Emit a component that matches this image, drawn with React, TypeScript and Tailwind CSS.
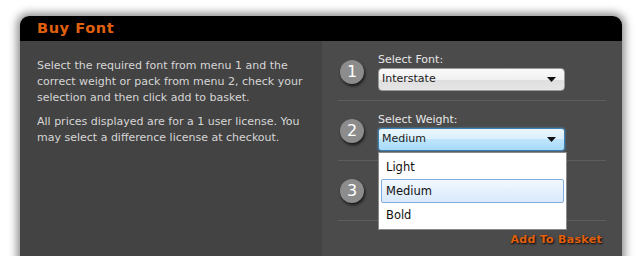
import React from "react";

const font = { fontFamily: '"DejaVu Sans", Verdana, sans-serif' };

function Circle({ n }: { n: number }) {
  return (
    <div className="w-6 h-6 rounded-full bg-[#8c8c8c] shadow-[1px_2px_3px_rgba(0,0,0,0.7)] flex items-center justify-center text-white text-[16px] leading-none shrink-0">
      {n}
    </div>
  );
}

function Caret() {
  return (
    <svg width="9" height="5" viewBox="0 0 9 5" className="shrink-0">
      <path d="M0 0h9L4.5 5z" fill="#111" />
    </svg>
  );
}

export default function App() {
  return (
    <div className="w-[640px] h-[256px] bg-white overflow-hidden pt-4 pl-5" style={font}>
      <div className="w-[602px] h-[260px] rounded-t-[9px] overflow-hidden shadow-[0_0_8px_3px_rgba(0,0,0,0.45)] flex flex-col">
        <div className="h-[25px] bg-black px-[17px] flex items-center">
          <span className="text-[#e0600e] font-bold text-[14.5px] tracking-[0.6px] leading-none">Buy Font</span>
        </div>
        <div className="flex flex-1">
          <div className="w-[302px] bg-[#434343] pl-[17px] pr-2 pt-[17px] text-[#d6d6d6] text-[11px] leading-[16px]">
            <p>Select the required font from menu 1 and the correct weight or pack from menu 2, check your selection and then click add to basket.</p>
            <p className="mt-2">All prices displayed are for a 1 user license. You may select a difference license at checkout.</p>
          </div>
          <div className="flex-1 bg-[#4b4b4b] px-4 flex flex-col">
            <div className="h-[60px] border-b border-[#5e5e5e] flex pl-[2px] pt-[19px] gap-[14px]">
              <Circle n={1} />
              <div className="-mt-[8px]">
                <div className="text-[#e8e8e8] text-[11px] leading-[16px]">Select Font:</div>
                <div className="w-[187px] h-[23px] rounded-[4px] border border-[#9a9a9a] bg-[linear-gradient(#fafafa,#f0f0f0_50%,#dedede_50%,#e6e6e6)] flex items-center justify-between pl-[3px] pr-[8px] text-[#1a1a1a] text-[11px]">
                  <span>Interstate</span>
                  <Caret />
                </div>
              </div>
            </div>
            <div className="h-[60px] border-b border-[#5e5e5e] flex pl-[2px] pt-[18px] gap-[14px] relative">
              <Circle n={2} />
              <div className="-mt-[7px] relative">
                <div className="text-[#e8e8e8] text-[11px] leading-[16px]">Select Weight:</div>
                <div className="w-[187px] h-[23px] rounded-[3px] border border-[#3c7fb1] bg-[linear-gradient(#eaf6fd,#d9f0fc_50%,#bee6fd_50%,#a7d9f5)] flex items-center justify-between pl-[3px] pr-[8px] text-[#1a1a1a] text-[11px] shadow-[0_0_2px_rgba(100,180,240,0.8)]">
                  <span>Medium</span>
                  <Caret />
                </div>
                <div className="absolute left-0 top-[40px] w-[189px] h-[78px] bg-white border border-[#8a8a8a] z-10 p-[2px] flex flex-col text-[#111] text-[11.5px]">
                  <div className="h-6 flex items-center pl-[5px] pt-[2px]">Light</div>
                  <div className="h-6 flex items-center pl-[4px] pt-[2px] rounded-[2px] border border-[#84acdd] bg-[linear-gradient(#f2f8fe,#d9e9fc)]">Medium</div>
                  <div className="h-6 flex items-center pl-[5px] pt-[2px]">Bold</div>
                </div>
              </div>
            </div>
            <div className="h-[60px] border-b border-[#5e5e5e] flex pl-[2px] pt-[18px] gap-[14px]">
              <Circle n={3} />
            </div>
            <div className="flex justify-end pr-[4px] pt-[13px]">
              <span className="text-[#e0600e] font-bold text-[11px] tracking-[0.3px] leading-none [text-shadow:1px_1px_2px_#000]">Add To Basket</span>
            </div>
          </div>
        </div>
      </div>
    </div>
  );
}
